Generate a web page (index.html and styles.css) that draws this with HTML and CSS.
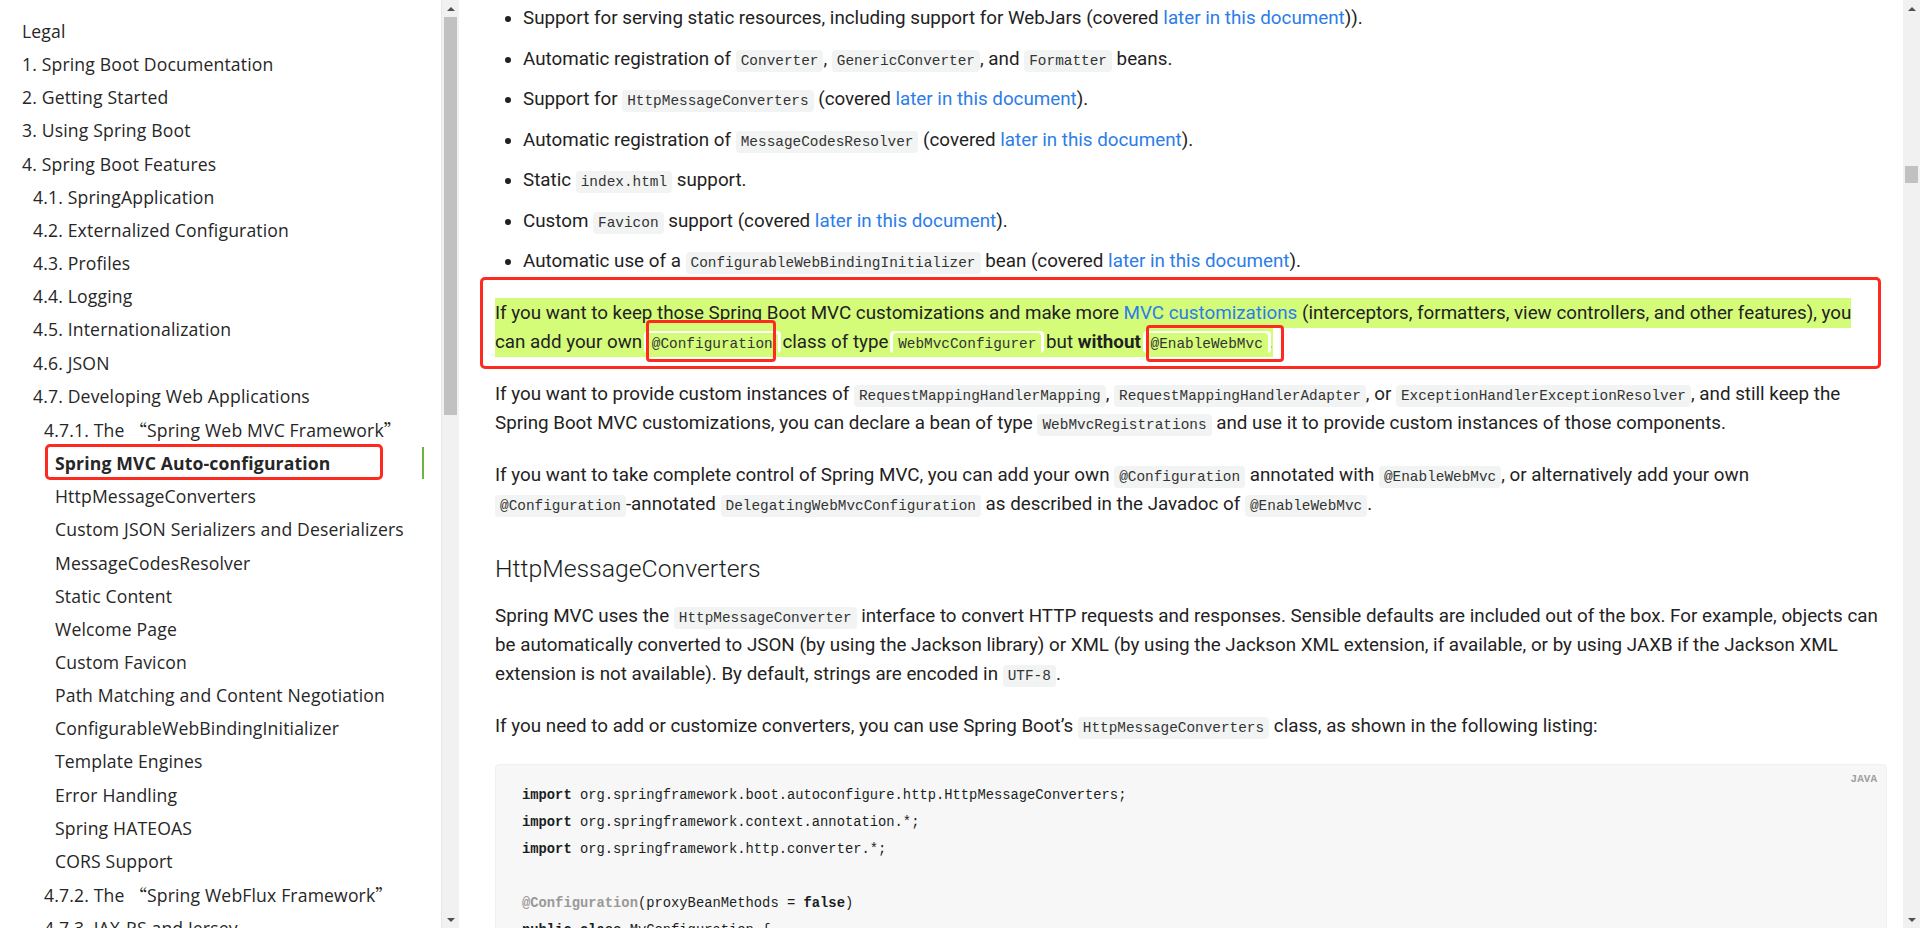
FILE: index.html
```html
<!DOCTYPE html>
<html lang="en">
<head>
<meta charset="utf-8">
<title>Spring Boot Reference Documentation</title>
<link rel="stylesheet" href="styles.css">
</head>
<body>
<div class="page">
  <nav class="sidebar">
    <ul class="toc">
      <li class="toc__item lv1"><a>Legal</a></li>
      <li class="toc__item lv1"><a>1. Spring Boot Documentation</a></li>
      <li class="toc__item lv1"><a>2. Getting Started</a></li>
      <li class="toc__item lv1"><a>3. Using Spring Boot</a></li>
      <li class="toc__item lv1"><a>4. Spring Boot Features</a></li>
      <li class="toc__item lv2"><a>4.1. SpringApplication</a></li>
      <li class="toc__item lv2"><a>4.2. Externalized Configuration</a></li>
      <li class="toc__item lv2"><a>4.3. Profiles</a></li>
      <li class="toc__item lv2"><a>4.4. Logging</a></li>
      <li class="toc__item lv2"><a>4.5. Internationalization</a></li>
      <li class="toc__item lv2"><a>4.6. JSON</a></li>
      <li class="toc__item lv2"><a>4.7. Developing Web Applications</a></li>
      <li class="toc__item lv3"><a>4.7.1. The <span class="q">“</span>Spring Web MVC Framework<span class="q">”</span></a></li>
      <li class="toc__item lv4 is-active"><a>Spring MVC Auto-configuration</a></li>
      <li class="toc__item lv4"><a>HttpMessageConverters</a></li>
      <li class="toc__item lv4"><a>Custom JSON Serializers and Deserializers</a></li>
      <li class="toc__item lv4"><a>MessageCodesResolver</a></li>
      <li class="toc__item lv4"><a>Static Content</a></li>
      <li class="toc__item lv4"><a>Welcome Page</a></li>
      <li class="toc__item lv4"><a>Custom Favicon</a></li>
      <li class="toc__item lv4"><a>Path Matching and Content Negotiation</a></li>
      <li class="toc__item lv4"><a>ConfigurableWebBindingInitializer</a></li>
      <li class="toc__item lv4"><a>Template Engines</a></li>
      <li class="toc__item lv4"><a>Error Handling</a></li>
      <li class="toc__item lv4"><a>Spring HATEOAS</a></li>
      <li class="toc__item lv4"><a>CORS Support</a></li>
      <li class="toc__item lv3"><a>4.7.2. The <span class="q">“</span>Spring WebFlux Framework<span class="q">”</span></a></li>
      <li class="toc__item lv3"><a>4.7.3. JAX-RS and Jersey</a></li>
    </ul>
  </nav>
  <div class="scrollbar scrollbar--side">
    <span class="scrollbar__arrow scrollbar__arrow--up"></span>
    <span class="scrollbar__thumb"></span>
    <span class="scrollbar__arrow scrollbar__arrow--down"></span>
  </div>

  <main class="content">
    <ul class="bullets">
      <li>Support for serving static resources, including support for WebJars (covered <a class="link">later in this document</a>)).</li>
      <li>Automatic registration of <code>Converter</code>, <code>GenericConverter</code>, and <code>Formatter</code> beans.</li>
      <li>Support for <code>HttpMessageConverters</code> (covered <a class="link">later in this document</a>).</li>
      <li>Automatic registration of <code>MessageCodesResolver</code> (covered <a class="link">later in this document</a>).</li>
      <li>Static <code>index.html</code> support.</li>
      <li>Custom <code>Favicon</code> support (covered <a class="link">later in this document</a>).</li>
      <li>Automatic use of a <code>ConfigurableWebBindingInitializer</code> bean (covered <a class="link">later in this document</a>).</li>
    </ul>

    <p class="para para--marked"><mark class="hl">If you want to keep those Spring Boot MVC customizations and make more <a class="link">MVC customizations</a> (interceptors, formatters, view controllers, and other features), you <br>can add your own <code class="hlcode boxed boxed--conf">@Configuration</code> class of type <code class="hlcode">WebMvcConfigurer</code> but <strong>without</strong> <code class="hlcode boxed boxed--enable">@EnableWebMvc</code>.</mark></p>

    <p class="para">If you want to provide custom instances of <code>RequestMappingHandlerMapping</code>, <code>RequestMappingHandlerAdapter</code>, or <code>ExceptionHandlerExceptionResolver</code>, and still keep the Spring Boot MVC customizations, you can declare a bean of type <code>WebMvcRegistrations</code> and use it to provide custom instances of those components.</p>

    <p class="para">If you want to take complete control of Spring MVC, you can add your own <code>@Configuration</code> annotated with <code>@EnableWebMvc</code>, or alternatively add your own <span class="nobreak"><code>@Configuration</code>-annotated</span> <code>DelegatingWebMvcConfiguration</code> as described in the Javadoc of <code>@EnableWebMvc</code>.</p>

    <h4 class="section-title">HttpMessageConverters</h4>

    <p class="para">Spring MVC uses the <code>HttpMessageConverter</code> interface to convert HTTP requests and responses. Sensible defaults are included out of the box. For example, objects can be automatically converted to JSON (by using the Jackson library) or XML (by using the Jackson XML extension, if available, or by using JAXB if the Jackson XML extension is not available). By default, strings are encoded in <code>UTF-8</code>.</p>

    <p class="para">If you need to add or customize converters, you can use Spring Boot’s <code>HttpMessageConverters</code> class, as shown in the following listing:</p>

    <div class="listing">
      <span class="listing__lang">JAVA</span>
<pre class="listing__code"><b>import</b> org.springframework.boot.autoconfigure.http.HttpMessageConverters;
<b>import</b> org.springframework.context.annotation.*;
<b>import</b> org.springframework.http.converter.*;

<b class="anno">@Configuration</b>(proxyBeanMethods = <b>false</b>)
<b>public</b> <b>class</b> MyConfiguration {
</pre>
    </div>
  </main>

  <div class="scrollbar scrollbar--main">
    <span class="scrollbar__arrow scrollbar__arrow--up"></span>
    <span class="scrollbar__thumb"></span>
    <span class="scrollbar__arrow scrollbar__arrow--down"></span>
  </div>
</div>
</body>
</html>
```

FILE: styles.css
```css
html, body {
  margin: 0;
  padding: 0;
  background: #fff;
}

.page {
  display: flex;
  height: 928px;
  overflow: hidden;
  color: #222;
}

/* ---------- sidebar ---------- */
.sidebar {
  width: 424px;
  flex: none;
  padding: 15px 17px 0 0;
  border-right: 1px solid #e6e6e6;
  box-sizing: content-box;
  overflow: hidden;
}

.toc {
  list-style: none;
  margin: 0;
  padding: 0;
  font-family: "Open Sans", sans-serif;
  font-size: 17.6px;
  line-height: 33.15px;
  letter-spacing: 0.15px;
  color: #262626;
}

.toc__item a {
  display: block;
  position: relative;
  white-space: nowrap;
}

.lv1 a { margin-left: 22px; }
.lv2 a { margin-left: 33px; }
.lv3 a { margin-left: 44px; }
.lv4 a { margin-left: 55px; }

.q {
  font-family: "Noto Sans CJK SC", sans-serif;
}

.is-active a {
  font-weight: 700;
}

.is-active a::before {
  content: "";
  position: absolute;
  right: 0;
  top: 0;
  bottom: 1px;
  width: 2px;
  background: #6db33f;
}

.is-active a::after {
  content: "";
  position: absolute;
  left: -10px;
  top: -3px;
  bottom: 0;
  width: 338px;
  border: 3px solid #ff2a1f;
  border-radius: 5px;
  box-sizing: border-box;
}

/* ---------- scrollbars ---------- */
.scrollbar {
  width: 17px;
  flex: none;
  background: #f1f1f1;
  display: flex;
  flex-direction: column;
  align-items: center;
}

.scrollbar__arrow {
  width: 17px;
  height: 17px;
  flex: none;
  display: flex;
  align-items: center;
  justify-content: center;
}

.scrollbar__arrow::before {
  content: "";
  width: 0;
  height: 0;
  border-left: 4px solid transparent;
  border-right: 4px solid transparent;
}

.scrollbar__arrow--up::before {
  border-bottom: 4px solid #505050;
}

.scrollbar__arrow--down {
  margin-top: auto;
}

.scrollbar__arrow--down::before {
  border-top: 4px solid #505050;
}

.scrollbar__thumb {
  width: 13px;
  background: #c1c1c1;
  flex: none;
}

.scrollbar--side .scrollbar__thumb {
  height: 398px;
}

.scrollbar--main .scrollbar__thumb {
  margin-top: 149px;
  height: 17px;
}

/* ---------- main content ---------- */
.content {
  flex: 1;
  min-width: 0;
  padding: 4px 16px 0 36px;
  font-family: Roboto, sans-serif;
  font-size: 18.8px;
  line-height: 29.2px;
  color: #1f2222;
}

.link {
  color: #2b7de9;
  text-decoration: none;
}

code {
  font-family: "Liberation Mono", monospace;
  font-size: 14.4px;
  line-height: 1;
  color: #333;
  background: #f2f3f3;
  padding: 3px 5px;
  border-radius: 4px;
}

.nobreak {
  white-space: nowrap;
}

.bullets {
  margin: 0 0 22.6px;
  padding: 0 0 0 28px;
  list-style: disc;
}

.bullets li + li {
  margin-top: 11.3px;
}

.para {
  margin: 0 0 22.6px;
}

.para--marked {
  position: relative;
}

.para--marked::before {
  content: "";
  position: absolute;
  top: -21.5px;
  bottom: -12px;
  left: -15px;
  right: 6px;
  border: 3px solid #ff2a1f;
  border-radius: 5px;
  pointer-events: none;
}

.hl {
  background: #d4fc79;
  color: inherit;
  padding: 4px 0;
}

.hlcode {
  background: #d4fc79;
  box-shadow: -3px -2px 0 #fff, 3px -2px 0 #fff;
}

.boxed {
  position: relative;
}

.boxed::after {
  content: "";
  position: absolute;
  border: 3px solid #ff2a1f;
  border-radius: 4px;
}

.boxed--conf::after {
  top: -13px;
  bottom: -7px;
  left: -1px;
  right: 2px;
}

.boxed--enable::after {
  top: -8px;
  bottom: -7px;
  left: 0;
  right: -16px;
}

.section-title {
  margin: 36px 0 18.8px;
  font-size: 24.8px;
  line-height: 28px;
  font-weight: 300;
  color: #191e1e;
}

/* ---------- code listing ---------- */
.listing {
  position: relative;
  margin-top: 3.5px;
  background: #f7f7f7;
  border: 1px solid #f0f0f0;
  border-radius: 4px;
}

.listing__lang {
  position: absolute;
  top: 7px;
  right: 9px;
  font-family: "Liberation Mono", monospace;
  font-size: 11px;
  line-height: 14px;
  font-weight: 700;
  color: #a0a0a0;
}

.listing__code {
  margin: 0;
  padding: 16.5px 26px 0;
  font-family: "Liberation Mono", monospace;
  font-size: 13.8px;
  line-height: 27px;
  color: #191e1e;
}

.listing__code b {
  font-weight: 700;
}

.listing__code .anno {
  color: #999;
}
```
